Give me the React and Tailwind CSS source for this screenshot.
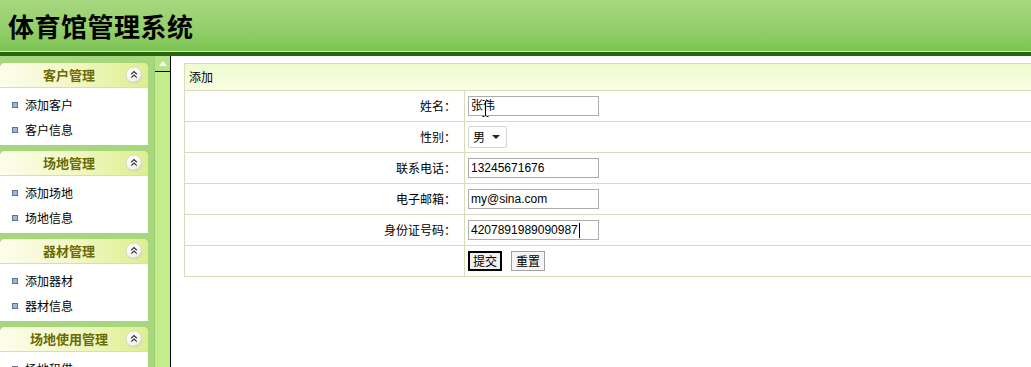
import React from "react";

const CJK = { fontFamily: '"Noto Sans CJK SC", "Liberation Sans", sans-serif' };

function CollapseIcon() {
  return (
    <svg width="18" height="18" viewBox="0 0 18 18" className="block">
      <defs>
        <radialGradient id="cg" cx="40%" cy="35%" r="70%">
          <stop offset="0%" stopColor="#ffffff" />
          <stop offset="70%" stopColor="#f4f4f0" />
          <stop offset="100%" stopColor="#c9cbbd" />
        </radialGradient>
      </defs>
      <circle cx="9" cy="9" r="8" fill="url(#cg)" stroke="#d4d6c2" strokeWidth="0.8" />
      <path d="M6.2 8.2 L9 5.6 L11.8 8.2 M6.2 11.6 L9 9 L11.8 11.6" fill="none" stroke="#333" strokeWidth="1.2" />
    </svg>
  );
}

function Panel({ title, items }) {
  return (
    <div className="w-[148px] shrink-0 bg-white rounded-t-[5px] overflow-hidden">
      <div className="h-[25px] flex items-center relative bg-gradient-to-r from-[#fdfdec] via-[#f1f7c4] to-[#dcef8e] border-b border-[#d7dcc0]">
        <div className="flex-1 text-center text-[13px] font-bold text-[#6b6b06] pr-[10px]" style={CJK}>{title}</div>
        <div className="absolute right-[5px] top-[3px]"><CollapseIcon /></div>
      </div>
      <div className="pt-[4px] pb-[3px]">
        {items.map((it) => (
          <div key={it} className="h-[25px] flex items-center pl-[12px]">
            <span className="w-[6px] h-[6px] bg-[#a3b6d3] border border-[#5c7292] mr-[7px]"></span>
            <span className="text-[12px] text-black" style={CJK}>{it}</span>
          </div>
        ))}
      </div>
    </div>
  );
}

function Row({ label, children }) {
  return (
    <div className="flex h-[31px] border-b border-[#d8dcb8]">
      <div className="w-[280px] border-r border-[#d8dcb8] flex items-center justify-end pr-[8px] text-[12px] text-black" style={CJK}>{label}</div>
      <div className="flex-1 flex items-center pl-[3px]">{children}</div>
    </div>
  );
}

function TextInput({ value, caret }) {
  return (
    <div className="w-[131px] h-[20px] border border-[#a9aeb3] bg-white flex items-center pl-[2px] text-[12px] text-black relative" style={{ fontFamily: '"Liberation Sans", "Noto Sans CJK SC", sans-serif' }}>
      <span>{value}</span>
      {caret && <span className="w-[1px] h-[15px] bg-black ml-[1px]"></span>}
    </div>
  );
}

export default function App() {
  return (
    <div className="w-[1031px] h-[367px] overflow-hidden bg-white flex flex-col">
      {/* header */}
      <div className="h-[51px] shrink-0 bg-gradient-to-b from-[#a7d77f] via-[#97d06e] to-[#7cc553] flex items-center pl-[8px]">
        <h1 className="text-[26px] font-bold text-black tracking-[0.5px] leading-none" style={CJK}>体育馆管理系统</h1>
      </div>
      <div className="h-[1px] shrink-0 bg-[#d2f1a8]"></div>
      <div className="h-[4px] shrink-0 bg-[#2a6410]"></div>

      <div className="flex flex-1 min-h-0">
        {/* sidebar */}
        <div className="w-[171px] flex bg-[#a6d77c] border-r border-black overflow-hidden">
          <div className="w-[148px] flex flex-col gap-[6px] pt-[7px]">
            <Panel title="客户管理" items={["添加客户", "客户信息"]} />
            <Panel title="场地管理" items={["添加场地", "场地信息"]} />
            <Panel title="器材管理" items={["添加器材", "器材信息"]} />
            <Panel title="场地使用管理" items={["场地租借", "使用信息"]} />
          </div>
          <div className="w-[6px]"></div>
          <div className="w-[16px] flex flex-col bg-[#c3ec8d] border-l border-[#9fd276]">
            <div className="h-[16px] bg-[#b6e384] border-b border-black flex items-center justify-center">
              <svg width="8" height="5" viewBox="0 0 8 5"><path d="M0 5 L4 0 L8 5 Z" fill="#ffffff" /></svg>
            </div>
          </div>
        </div>

        {/* main */}
        <div className="flex-1 overflow-hidden pl-[13px] pt-[7px]">
          <div className="w-[calc(100%+6px)] border-t border-l border-[#d8dcb8]">
            <div className="h-[27px] flex items-center pl-[4px] bg-gradient-to-b from-[#edfbd0] to-[#fafde3] border-b border-[#d8dcb8] text-[12px] text-black" style={CJK}>添加</div>
            <Row label="姓名：">
              <div className="relative">
                <TextInput value="张伟" />
                <svg className="absolute left-[14px] top-[4px]" width="7" height="17" viewBox="0 0 7 17">
                  <path d="M0.5 0.5 H2.5 M4.5 0.5 H6.5 M3.5 1 V16 M0.5 16.5 H2.5 M4.5 16.5 H6.5" stroke="#000" strokeWidth="1" fill="none" />
                </svg>
              </div>
            </Row>
            <Row label="性别：">
              <div className="w-[39px] h-[22px] border border-[#d3d3d3] rounded-[2px] bg-white flex items-center pl-[4px] gap-[7px]">
                <span className="text-[12px] text-black" style={CJK}>男</span>
                <svg width="8" height="4" viewBox="0 0 8 4"><path d="M0 0 H8 L4 4 Z" fill="#222" /></svg>
              </div>
            </Row>
            <Row label="联系电话："><TextInput value="13245671676" /></Row>
            <Row label="电子邮箱："><TextInput value="my@sina.com" /></Row>
            <Row label="身份证号码："><TextInput value="4207891989090987" caret /></Row>
            <Row label="">
              <div className="flex gap-[9px]">
                <button className="w-[34px] h-[20px] border-2 border-black bg-[#f0f0f0] text-[12px] text-black leading-none" style={CJK}>提交</button>
                <button className="w-[34px] h-[20px] border border-[#a0a0a0] bg-[#f4f4f4] text-[12px] text-black leading-none" style={CJK}>重置</button>
              </div>
            </Row>
          </div>
        </div>
      </div>
    </div>
  );
}
